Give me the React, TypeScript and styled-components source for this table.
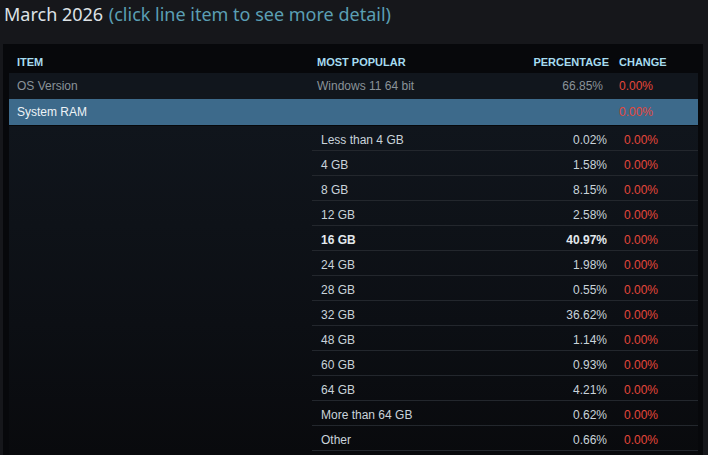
import React from "react";
import styled, { createGlobalStyle } from "styled-components";

const Global = createGlobalStyle`
  html, body { margin: 0; padding: 0; background: #16171b; }
  body { font-family: "Liberation Sans", Arial, sans-serif; overflow: hidden; }
`;

const Page = styled.div`
  width: 708px;
  height: 455px;
  overflow: hidden;
  background: #16171b;
`;

const Title = styled.div`
  font-family: "Noto Sans", "Open Sans", sans-serif;
  font-size: 18px;
  line-height: 28px;
  padding: 0 0 16px 4px;
  color: #dde2e6;
  white-space: nowrap;
`;

const Hint = styled.span`
  color: #5b9fb4;
  margin-left: 1px;
`;

const Panel = styled.div`
  margin: 0 5px 0 3px;
  background: #07080b;
  padding: 0 5px 0 6px;
  height: 420px;
`;

const HeaderRow = styled.div`
  display: grid;
  grid-template-columns: 300px 222px 80px 87px;
  height: 29px;
  align-items: end;
  padding-bottom: 5px;
  box-sizing: border-box;
`;

const HeadCell = styled.div<{ $right?: boolean }>`
  font-size: 11px;
  font-weight: bold;
  color: #a6dcf0;
  text-transform: uppercase;
  padding-left: 8px;
  text-align: ${(p) => (p.$right ? "right" : "left")};
  ${(p) => (p.$right ? "padding-left: 0; padding-right: 2px;" : "")}
`;

const MainRow = styled.div<{ $active?: boolean }>`
  display: grid;
  grid-template-columns: 300px 222px 80px 87px;
  height: 26px;
  align-items: center;
  font-size: 12px;
  background: ${(p) => (p.$active ? "#3d6a8b" : "#11161d")};
  color: ${(p) => (p.$active ? "#eef3f6" : "#8a9399")};
  ${(p) => (p.$active ? "border-bottom: 1px solid #07080b;" : "")}
`;

const Cell = styled.div<{ $right?: boolean; $red?: boolean }>`
  padding: ${(p) => (p.$right ? "0 8px 0 0" : "0 0 0 8px")};
  text-align: ${(p) => (p.$right ? "right" : "left")};
  ${(p) => (p.$red ? "color: #e4473b;" : "")}
  white-space: nowrap;
`;

const Detail = styled.div`
  background: linear-gradient(180deg, #10151c 0%, #0c0f14 60%, #090a0d 100%);
  padding-left: 303px;
  height: 330px;
`;

const SubRow = styled.div<{ $bold?: boolean }>`
  display: grid;
  grid-template-columns: 1fr 80px 83px;
  height: 25px;
  padding-top: 4px;
  box-sizing: border-box;
  border-bottom: 1px solid #23272d;
  align-items: center;
  font-size: 12px;
  color: ${(p) => (p.$bold ? "#e3e9ed" : "#c9d3da")};
  font-weight: ${(p) => (p.$bold ? "bold" : "normal")};
`;

const SubCell = styled.div<{ $right?: boolean; $red?: boolean }>`
  padding: ${(p) => (p.$right ? "0 8px 0 0" : "0 0 0 9px")};
  text-align: ${(p) => (p.$right ? "right" : "left")};
  white-space: nowrap;
  ${(p) => (p.$red ? "color: #e4473b; font-weight: normal;" : "")}
`;

const rows: [string, string, boolean?][] = [
  ["Less than 4 GB", "0.02%"],
  ["4 GB", "1.58%"],
  ["8 GB", "8.15%"],
  ["12 GB", "2.58%"],
  ["16 GB", "40.97%", true],
  ["24 GB", "1.98%"],
  ["28 GB", "0.55%"],
  ["32 GB", "36.62%"],
  ["48 GB", "1.14%"],
  ["60 GB", "0.93%"],
  ["64 GB", "4.21%"],
  ["More than 64 GB", "0.62%"],
  ["Other", "0.66%"],
];

export default function App() {
  return (
    <Page>
      <Global />
      <Title>
        March 2026 <Hint>(click line item to see more detail)</Hint>
      </Title>
      <Panel>
        <HeaderRow>
          <HeadCell>Item</HeadCell>
          <HeadCell>Most Popular</HeadCell>
          <HeadCell $right>Percentage</HeadCell>
          <HeadCell>Change</HeadCell>
        </HeaderRow>
        <MainRow>
          <Cell>OS Version</Cell>
          <Cell>Windows 11 64 bit</Cell>
          <Cell $right>66.85%</Cell>
          <Cell $red>0.00%</Cell>
        </MainRow>
        <MainRow $active>
          <Cell>System RAM</Cell>
          <Cell></Cell>
          <Cell $right></Cell>
          <Cell $red>0.00%</Cell>
        </MainRow>
        <Detail>
          {rows.map(([label, pct, bold]) => (
            <SubRow key={label} $bold={bold}>
              <SubCell>{label}</SubCell>
              <SubCell $right>{pct}</SubCell>
              <SubCell $red>0.00%</SubCell>
            </SubRow>
          ))}
        </Detail>
      </Panel>
    </Page>
  );
}
